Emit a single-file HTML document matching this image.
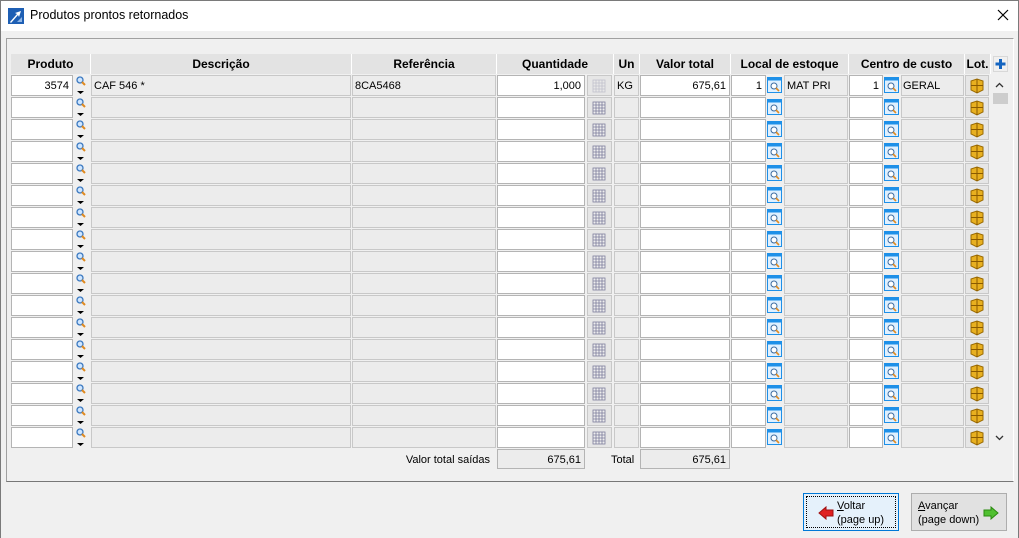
<!DOCTYPE html>
<html><head><style>
*{margin:0;padding:0;box-sizing:border-box}
body{width:1019px;height:538px;overflow:hidden;background:#f0f0f0;font-family:"Liberation Sans",sans-serif;font-size:12px;color:#000;position:relative}
.a{position:absolute}
.title{left:0;top:0;width:1019px;height:31px;background:#fff;border:1px solid #7a7a7a;border-bottom:none}
.hd{position:absolute;top:54px;height:20px;background:#e3e3e3;border-right:1px solid #fff;font-weight:bold;text-align:center;line-height:20px;font-size:12px}
.t{position:absolute;font-size:11px;line-height:22px}
.btn{position:absolute;height:38px;border:1px solid #adadad;background:#e1e1e1;font-size:11px;line-height:14px}
</style></head><body>
<div class="a title"></div>
<svg class="a" style="left:8px;top:8px" width="16" height="16" viewBox="0 0 16 16"><rect x="0" y="0" width="16" height="16" fill="#1e5fb4"/><path d="M2 14 L9 6 L7 5 L13 3 L11 9 L10 7 L3 15Z" fill="#fff"/><path d="M9 14 L14 9 L14 14Z" fill="#8fb6e6"/></svg>
<div class="a" style="left:30px;top:8px;font-size:12.5px">Produtos prontos retornados</div>
<svg class="a" style="left:997px;top:9px" width="12" height="12"><path d="M1 1L11 11M11 1L1 11" stroke="#000" stroke-width="1.2"/></svg>
<div class="a" style="left:0;top:31px;width:1px;height:507px;background:#7a7a7a"></div>
<div class="a" style="left:1018px;top:31px;width:1px;height:507px;background:#7a7a7a"></div>
<div class="a" style="left:6px;top:38px;width:1008px;height:444px;border:1px solid #a0a0a0;border-right-color:#fff;border-bottom-color:#777"></div>

<div class="hd" style="left:11px;width:80px">Produto</div>
<div class="hd" style="left:91px;width:261px">Descrição</div>
<div class="hd" style="left:352px;width:145px">Referência</div>
<div class="hd" style="left:497px;width:117px">Quantidade</div>
<div class="hd" style="left:614px;width:26px">Un</div>
<div class="hd" style="left:640px;width:91px">Valor total</div>
<div class="hd" style="left:731px;width:118px">Local de estoque</div>
<div class="hd" style="left:849px;width:116px">Centro de custo</div>
<div class="hd" style="left:965px;width:26px">Lot.</div>
<svg class="a" style="left:993px;top:56px" width="15" height="16"><rect x="0.5" y="0.5" width="14" height="15" fill="#f0f0f0" stroke="#d8d8d8"/><path d="M7.5 3V13M2.5 8H12.5" stroke="#1565c0" stroke-width="3"/></svg>

<svg class="a" style="left:0;top:0" width="1019" height="538">
<defs>
<g id="mag"><circle cx="4" cy="4" r="3" fill="#cfe6ff" stroke="#3a78c0" stroke-width="1.3"/><path d="M6 6L9 9" stroke="#e08a20" stroke-width="2"/></g>
<g id="bmag"><rect x="0.5" y="0.5" width="14" height="15" fill="#dff0ff" stroke="#1e90e8"/><rect x="0.5" y="0.5" width="14" height="3" fill="#1e90e8"/><circle cx="7" cy="9" r="3" fill="#fff" stroke="#3a6aa0"/><path d="M9 11L12 14" stroke="#e08a20" stroke-width="1.6"/></g>
<g id="grid"><rect x="0" y="0" width="12" height="12" fill="#eee" stroke="#7c7c9c" stroke-width="0.8"/><path d="M0 3H12M0 6H12M0 9H12M3 0V12M6 0V12M9 0V12" stroke="#7c7c9c" stroke-width="0.8"/></g>
<g id="lot"><path d="M2 3 L8 1 L14 3 L14 12 L8 15 L2 12Z" fill="#e8b020" stroke="#9a6a00"/><path d="M8 1V15M2 7.5L14 7.5" stroke="#8a5a00"/></g>
<pattern id="row" patternUnits="userSpaceOnUse" x="0" y="75" width="1019" height="22">
<rect x="11.5" y="0.5" width="61" height="20" fill="#fff" stroke="#b4b4b4"/>
<use href="#mag" x="76" y="1"/>
<path d="M77 16H84L80.5 19Z" fill="#000"/>
<rect x="91.5" y="0.5" width="259" height="20" fill="#ececec" stroke="#c8c8c8"/>
<rect x="352.5" y="0.5" width="143" height="20" fill="#ececec" stroke="#c8c8c8"/>
<rect x="497.5" y="0.5" width="87" height="20" fill="#fff" stroke="#b4b4b4"/>
<rect x="587.5" y="0.5" width="24" height="20" fill="#e6e6e6" stroke="#c8c8c8"/>
<use href="#grid" x="593" y="5"/>
<rect x="614.5" y="0.5" width="24" height="20" fill="#ececec" stroke="#c8c8c8"/>
<rect x="640.5" y="0.5" width="89" height="20" fill="#fff" stroke="#b4b4b4"/>
<rect x="731.5" y="0.5" width="34" height="20" fill="#fff" stroke="#b4b4b4"/>
<use href="#bmag" x="767" y="2"/>
<rect x="784.5" y="0.5" width="63" height="20" fill="#ececec" stroke="#c8c8c8"/>
<rect x="849.5" y="0.5" width="33" height="20" fill="#fff" stroke="#b4b4b4"/>
<use href="#bmag" x="884" y="2"/>
<rect x="901.5" y="0.5" width="62" height="20" fill="#ececec" stroke="#c8c8c8"/>
<rect x="965.5" y="0.5" width="23" height="20" fill="#e6e6e6" stroke="#c8c8c8"/>
<use href="#lot" x="969" y="3"/>
</pattern>
</defs>
<rect x="0" y="75" width="991" height="374" fill="url(#row)"/>
<rect x="587.5" y="75.5" width="24" height="20" fill="#e6e6e6" stroke="#c8c8c8"/>
<g opacity="0.35"><use href="#grid" x="593" y="80"/></g>
<rect x="992" y="75" width="17" height="374" fill="#f0f0f0"/>
<path d="M996 87L999.5 83.5L1003 87" stroke="#333" stroke-width="1.3" fill="none"/>
<rect x="993" y="93" width="15" height="11" fill="#cdcdcd"/>
<path d="M996 436L999.5 439.5L1003 436" stroke="#333" stroke-width="1.3" fill="none"/>
<rect x="497.5" y="449.5" width="87" height="19" fill="#ececec" stroke="#b4b4b4"/>
<rect x="640.5" y="449.5" width="89" height="19" fill="#ececec" stroke="#b4b4b4"/>
</svg>

<div class="t" style="left:11px;top:75px;width:58px;text-align:right">3574</div>
<div class="t" style="left:94px;top:75px">CAF 546 *</div>
<div class="t" style="left:355px;top:75px">8CA5468</div>
<div class="t" style="left:497px;top:75px;width:84px;text-align:right">1,000</div>
<div class="t" style="left:617px;top:75px">KG</div>
<div class="t" style="left:640px;top:75px;width:86px;text-align:right">675,61</div>
<div class="t" style="left:731px;top:75px;width:31px;text-align:right">1</div>
<div class="t" style="left:787px;top:75px">MAT PRI</div>
<div class="t" style="left:849px;top:75px;width:30px;text-align:right">1</div>
<div class="t" style="left:903px;top:75px">GERAL</div>

<div class="t" style="left:370px;top:449px;width:120px;text-align:right">Valor total saídas</div>
<div class="t" style="left:497px;top:449px;width:84px;text-align:right">675,61</div>
<div class="t" style="left:611px;top:449px">Total</div>
<div class="t" style="left:640px;top:449px;width:86px;text-align:right">675,61</div>

<div class="btn" style="left:803px;top:493px;width:96px;border:1px solid #0078d7;background:#e5f1fb">
<div class="a" style="left:2px;top:2px;right:2px;bottom:2px;border:1px dotted #000"></div>
<svg class="a" style="left:14px;top:12px" width="16" height="14"><path d="M1 7L8 1V4H15V10H8V13Z" fill="#e02020" stroke="#a01010"/></svg>
<div class="a" style="left:33px;top:5px"><u>V</u>oltar<br>(page up)</div></div>
<div class="btn" style="left:911px;top:493px;width:96px">
<div class="a" style="left:6px;top:5px"><u>A</u>vançar<br>(page down)</div>
<svg class="a" style="left:71px;top:12px" width="16" height="14"><path d="M15 7L8 1V4H1V10H8V13Z" fill="#50c030" stroke="#2a8a10"/></svg></div>
</body></html>
